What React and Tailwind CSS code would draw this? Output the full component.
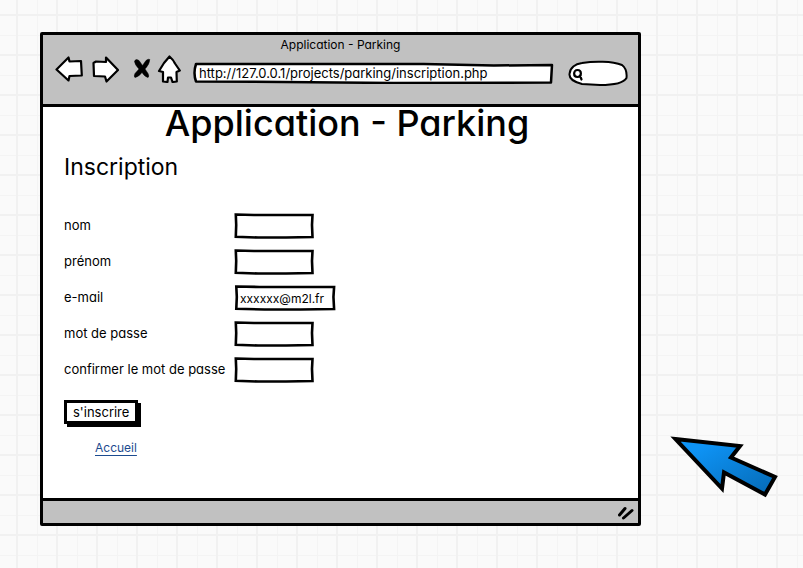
const fields = [
  { id: "nom", label: "nom", type: "text" },
  { id: "prenom", label: "prénom", type: "text" },
  { id: "email", label: "e-mail", type: "email", value: "xxxxxx@m2l.fr" },
  { id: "mdp", label: "mot de passe", type: "password" },
  { id: "confirmation", label: "confirmer le mot de passe", type: "password" },
];

function SketchFrame() {
  return (
    <svg
      aria-hidden="true"
      className="pointer-events-none absolute inset-0 h-full w-full"
      viewBox="0 0 80 26"
      preserveAspectRatio="none"
      fill="none"
      stroke="#000"
      strokeWidth="2.6"
      strokeLinejoin="miter"
    >
      <path
        vectorEffect="non-scaling-stroke"
        d="M1.8 1.500 L20 2 L50 2 L78.500 2 L78 12 L78.500 24 L52 24.500 L24 24.500 L1.800 23.800 L2.200 12 Z"
      />
    </svg>
  );
}

function ToolbarIcon({ label, d, filled, className }) {
  return (
    <button type="button" aria-label={label} className={className}>
      <svg
        className="h-7 w-full"
        viewBox={filled ? "0 0 18 28" : "0 0 28 28"}
        fill={filled ? "#000" : "#fff"}
        stroke="#000"
        strokeWidth={filled ? "0.5" : "2.2"}
        strokeLinejoin="round"
      >
        <path d={d} />
      </svg>
    </button>
  );
}

function BrowserHeader() {
  return (
    <header className="border-b-3 border-black bg-[#c1c1c1] pt-0.5 pb-3">
      <p className="text-center text-[12px] leading-4">Application - Parking</p>
      <div className="flex h-[39px] items-center pr-2.5 pl-3">
        <nav aria-label="Navigation" className="flex items-center pb-2">
          <ToolbarIcon
            label="Précédent"
            className="w-7"
            d="M1.500 14.500 L13.500 2.500 L14.500 6.500 L26 6 L26.800 20.500 L14.500 21 L13.500 25.500 Z"
          />
          <ToolbarIcon
            label="Suivant"
            className="ml-2 w-7"
            d="M2.500 8 L5 6.500 L15 7 L15 2.500 L27 15 L15.500 26.500 L14 21.500 L3 21 Z"
          />
          <ToolbarIcon
            label="Arrêter"
            filled
            className="ml-3.5 w-[18px]"
            d="M1.500 6 Q3 3.500 6 5.500 L9.500 10.500 L13 5.500 Q15.500 3.500 16.800 4.500 Q16.500 9.500 12 14 L15 18.500 Q16.500 21.500 15 22.500 Q12 22 9 17.500 Q5.500 22 2 22.500 Q0.500 21.500 2 18.500 L6 14 Q1.500 9.500 1.500 6 Z"
          />
          <ToolbarIcon
            label="Accueil du navigateur"
            className="ml-1 w-7"
            d="M14.500 1.500 Q18.500 5 20 8.500 L24.800 15.500 L21.500 17 L21.800 26.500 L17.500 27 L16 22.500 L13 22.500 L12.500 27 L8 26.500 L8 17 L4 16 L9 8 Z"
          />
        </nav>
        <div className="relative ml-2.5 min-w-0 flex-1">
          <svg
            aria-hidden="true"
            className="absolute inset-0 h-full w-full"
            viewBox="0 0 360 22"
            preserveAspectRatio="none"
            fill="#fff"
            stroke="#000"
            strokeWidth="2.500"
            strokeLinejoin="round"
          >
            <path d="M3 2 L120 2 L230 2 L300 3.500 L358 3 L357 20.500 L200 21 L90 20 L3 19.500 Q0 11 3 2 Z" />
          </svg>
          <input
            type="text"
            aria-label="Adresse"
            defaultValue="http://127.0.0.1/projects/parking/inscription.php"
            className="relative block h-[22px] w-full bg-transparent px-1.5 text-[13px] outline-none"
          />
        </div>
        <div className="relative ml-3.5 w-[60px]">
          <svg
            aria-hidden="true"
            className="absolute inset-0 h-full w-full"
            viewBox="0 0 60 26"
            fill="#fff"
            stroke="#000"
            strokeWidth="2"
            strokeLinejoin="round"
          >
            <path d="M14 3 C26 1 44 1 54 5 C58 8 59 13 58.500 18 C55 24 44 25 32 25 L14 24 C6 22 1 19 1.500 14 C2 8 7 4 14 3 Z" />
            <path
              d="M9.500 10 C5 10 5 17 9.500 17 C14 17 14 10 9.500 10 Z M12 15.500 L13.500 19.500"
              strokeWidth="2.200"
              strokeLinecap="round"
            />
          </svg>
          <input
            type="text"
            aria-label="Rechercher"
            className="relative block h-[26px] w-full bg-transparent pr-2 pl-4 text-[12px] outline-none"
          />
        </div>
      </div>
    </header>
  );
}

function RegistrationForm() {
  return (
    <form className="mt-[27px]">
      {fields.map((field) => (
        <div key={field.id} className="flex h-9 items-center">
          <label htmlFor={field.id} className="w-[170px] shrink-0 text-[13px]">
            {field.label}
          </label>
          <div className={field.value ? "relative w-[102px]" : "relative w-20"}>
            <input
              id={field.id}
              type={field.type}
              defaultValue={field.value}
              className="block h-[26px] w-full bg-transparent px-1.5 text-[12px] outline-none"
            />
            <SketchFrame />
          </div>
        </div>
      ))}
      <button
        type="button"
        className="mt-3 block h-6 border-3 border-black bg-white px-1.5 text-[13px] leading-4 shadow-[3px_3px_0_#000]"
      >
        s'inscrire
      </button>
    </form>
  );
}

function Pointer() {
  return (
    <svg aria-hidden="true" className="w-[110px]" viewBox="0 0 110 64">
      <defs>
        <linearGradient id="pointer-blue" x1="0" y1="0" x2="1" y2="1">
          <stop offset="0.2" stopColor="#0e93f5" />
          <stop offset="1" stopColor="#0569b4" />
        </linearGradient>
      </defs>
      <path
        d="M6.500 5 L71 12 L62 23.500 L106 43 L96 60.500 L55 38.500 L53 54.500 Z"
        fill="url(#pointer-blue)"
        stroke="#000"
        strokeWidth="4"
        strokeMiterlimit="10"
      />
    </svg>
  );
}

export default function App() {
  return (
    <main
      className="flex min-h-screen items-start gap-7 bg-[#fafafa] bg-[linear-gradient(90deg,#f1f1f1_2px,transparent_2px),linear-gradient(#f1f1f1_2px,transparent_2px),linear-gradient(90deg,#f4f4f4_1px,transparent_1px),linear-gradient(#f4f4f4_1px,transparent_1px)] bg-size-[40px_40px] bg-position-[16px_14px,16px_14px,37px_35px,37px_35px] pt-8 pr-6 pb-10 pl-10 font-[Inter,'Liberation_Sans',sans-serif] text-black [font-feature-settings:'cv11']"
    >
      <section className="min-w-0 flex-1 rounded-xs border-3 border-black bg-white">
        <BrowserHeader />
        <div className="pr-2 pb-10 pl-[21px]">
          <h1 className="text-center text-[36px] leading-8 font-medium">Application - Parking</h1>
          <h2 className="mt-3.5 text-[23px] leading-7">Inscription</h2>
          <RegistrationForm />
          <a
            href="#accueil"
            className="mt-4 ml-[31px] inline-block text-[12px] leading-4 text-[#1c4b8f] underline underline-offset-3"
          >
            Accueil
          </a>
        </div>
        <footer className="flex h-[25px] items-center justify-end border-t-3 border-black bg-[#c1c1c1] pr-1">
          <svg
            aria-hidden="true"
            className="h-4 w-4"
            viewBox="0 0 16 16"
            stroke="#000"
            strokeWidth="3"
            strokeLinecap="round"
          >
            <path d="M1.500 11 L7 4.500 M5.500 14 L14 6.500" />
          </svg>
        </footer>
      </section>
      <aside className="mt-[402px] shrink-0">
        <Pointer />
      </aside>
    </main>
  );
}
